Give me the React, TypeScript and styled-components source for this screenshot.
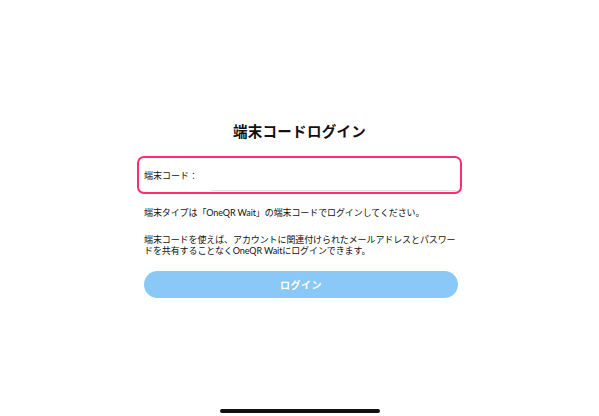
import { createGlobalStyle, styled } from 'styled-components';

const GlobalStyle = createGlobalStyle`
  html, body {
    margin: 0;
    padding: 0;
    background: #ffffff;
  }
  body {
    font-family: 'Lato', 'Noto Sans CJK JP', sans-serif;
    color: #111111;
  }
`;

export default function App() {
  return (
    <>
      <GlobalStyle />
      <Screen>
        <Content>
          <Title>端末コードログイン</Title>
          <CodeBox>
            <label htmlFor="code">端末コード：</label>
            <CodeInput id="code" type="text" />
          </CodeBox>
          <Notes>
            <p>端末タイプは「OneQR Wait」の端末コードでログインしてください。</p>
            <p>
              端末コードを使えば、アカウントに関連付けられたメールアドレスとパスワー
              <br />
              ドを共有することなくOneQR Waitにログインできます。
            </p>
          </Notes>
          <LoginButton type="button" disabled>
            ログイン
          </LoginButton>
        </Content>
        <HomeIndicator />
      </Screen>
    </>
  );
}

const Screen = styled.div`
  box-sizing: border-box;
  width: 599px;
  height: 416px;
  display: flex;
  flex-direction: column;
  align-items: center;
  justify-content: space-between;
  padding-top: 121px;
  padding-bottom: 3px;
`;

const Content = styled.div`
  width: 325px;
  display: flex;
  flex-direction: column;
  align-items: stretch;
`;

const Title = styled.h1`
  margin: 0 0 14px;
  text-align: center;
  font-size: 14.5px;
  line-height: 21px;
  font-weight: 700;
  letter-spacing: 0.3px;
`;

const CodeBox = styled.div`
  box-sizing: border-box;
  height: 38px;
  display: flex;
  align-items: stretch;
  padding: 0 4px 0 5px;
  border: 2px solid #ff2d70;
  border-radius: 7px;

  label {
    display: flex;
    align-items: center;
    font-size: 9px;
    white-space: nowrap;
    padding-right: 13px;
  }
`;

const CodeInput = styled.input`
  flex: 1;
  min-width: 0;
  border: none;
  border-bottom: 1px solid #e2e2e2;
  margin-bottom: 1px;
  outline: none;
  background: transparent;
  font-size: 10px;
`;

const Notes = styled.div`
  padding: 13px 4px 15px 7px;
  font-size: 9px;
  line-height: 11px;
  letter-spacing: -0.1px;

  p {
    margin: 0;
    white-space: nowrap;
  }

  p + p {
    margin-top: 16px;
  }
`;

const LoginButton = styled.button`
  margin: 0 4px 0 7px;
  height: 27px;
  border: none;
  border-radius: 13.5px;
  background: #8ac8f8;
  color: #ffffff;
  font-family: 'Lato', 'Noto Sans CJK JP', sans-serif;
  font-size: 10px;
  font-weight: 700;
  letter-spacing: 0.5px;
`;

const HomeIndicator = styled.div`
  width: 160px;
  height: 4px;
  border-radius: 2px;
  background: #111111;
`;
